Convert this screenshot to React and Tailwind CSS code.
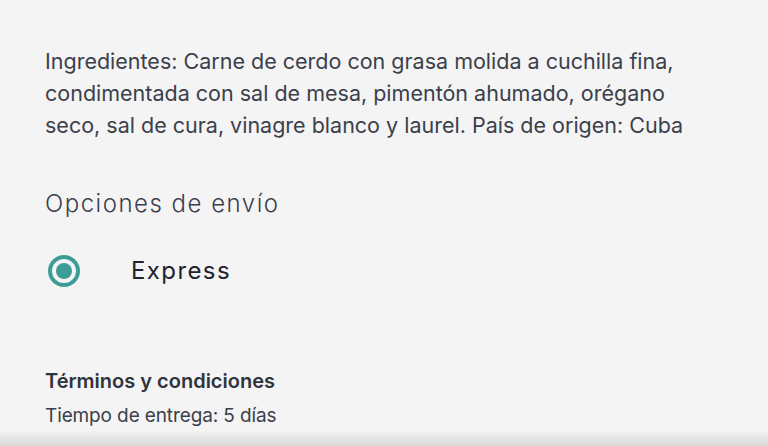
export default function App() {
  return (
    <div
      className="relative h-[446px] w-[768px] overflow-hidden bg-[#f4f4f4] text-[#3b404b]"
      style={{ fontFamily: 'Inter, "Noto Sans", sans-serif' }}
    >
      <div className="w-[700px] pl-[45px] pt-[45px]">
        {/* Description */}
        <p className="text-[21.5px] leading-[32px]">
          Ingredientes: Carne de cerdo con grasa molida a cuchilla fina,
          condimentada con sal de mesa, pimentón ahumado, orégano seco, sal de
          cura, vinagre blanco y laurel. País de origen: Cuba
        </p>

        {/* Shipping options */}
        <h2 className="mt-[48px] text-[24px] font-light leading-[30px] tracking-[1.5px] text-[#3a404c]">
          Opciones de envío
        </h2>

        <label className="mt-[36px] flex items-center">
          <span className="ml-[3px] flex h-[32px] w-[32px] items-center justify-center rounded-full border-[4px] border-[#3d9c96]">
            <span className="h-[16px] w-[16px] rounded-full bg-[#3d9c96]" />
          </span>
          <span className="ml-[51px] text-[24px] leading-[30px] tracking-[1.4px] text-[#1d222c]">
            Express
          </span>
        </label>

        {/* Terms */}
        <h3 className="mt-[81px] text-[20px] font-semibold leading-[26px] text-[#2f333c]">
          Términos y condiciones
        </h3>
        <p className="mt-[9px] text-[19px] leading-[26px] tracking-[-0.12px]">
          Tiempo de entrega: 5 días
        </p>
      </div>

      {/* Bottom bar shadow */}
      <div className="absolute bottom-0 left-0 right-0 h-[16px] bg-gradient-to-b from-[#f4f4f4] to-[#d9d9d9]" />
    </div>
  )
}
